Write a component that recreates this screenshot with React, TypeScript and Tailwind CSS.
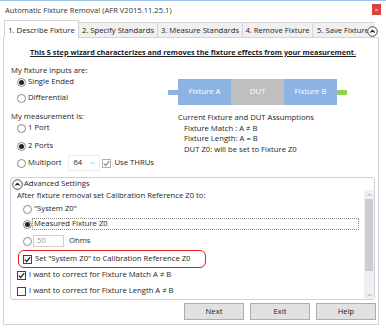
import React from 'react';

function Radio({ on }: { on?: boolean }) {
  return (
    <span className="flex h-[9px] w-[9px] shrink-0 items-center justify-center rounded-full border border-[#8a8a8a] bg-white">
      {on && <span className="h-[5px] w-[5px] rounded-full bg-[#222]" />}
    </span>
  );
}

function Check({ on, dim }: { on?: boolean; dim?: boolean }) {
  return (
    <span
      className={`flex h-[9px] w-[9px] shrink-0 items-center justify-center border bg-white ${
        dim ? 'border-[#b0b0b0]' : 'border-[#444]'
      }`}
    >
      {on && (
        <svg width="7" height="7" viewBox="0 0 7 7">
          <path d="M0.8 3.6 L2.7 5.5 L6.2 1.2" fill="none" stroke={dim ? '#8c8c8c' : '#222'} strokeWidth="1.2" />
        </svg>
      )}
    </span>
  );
}

function UpCircle() {
  return (
    <svg width="11" height="11" viewBox="0 0 11 11" className="shrink-0">
      <circle cx="5.5" cy="5.5" r="4.8" fill="#fff" stroke="#333" strokeWidth="0.9" />
      <path d="M3.4 6.5 L5.5 4.4 L7.6 6.5" fill="none" stroke="#222" strokeWidth="1.1" />
    </svg>
  );
}

function Btn({ label }: { label: string }) {
  return (
    <button className="flex h-[17px] w-[60px] items-center justify-center border border-[#adadad] bg-[#e1e1e1] text-[#1e1e1e]">
      {label}
    </button>
  );
}

export default function App() {
  return (
    <div className="h-[328px] w-[386px] overflow-hidden border-t border-[#9cc3ea] bg-white font-['Open_Sans',sans-serif] text-[7.7px] text-[#1e1e1e]">
      {/* title bar */}
      <div className="flex h-[19px] items-start justify-between px-[5px]">
        <span className="mt-[4px] text-[7.6px] leading-[11px] text-[#333]">
          Automatic Fixture Removal (AFR V2015.11.25.1)
        </span>
        <span className="mt-[3px] flex h-[11px] w-[9px] items-center justify-center bg-[#d9443f] text-[6px] leading-none text-white">
          ×
        </span>
      </div>

      {/* tabs */}
      <div className="relative flex h-[17px] items-end pl-[4px]">
        <div className="relative z-10 -mb-px flex h-[18px] w-[75px] items-center justify-center border border-b-0 border-[#d4d4d4] bg-white pt-[3px]">
          1. Describe Fixture
        </div>
        <div className="flex h-[15px] w-[79px] items-center justify-center border-t border-r border-[#d4d4d4] bg-[#f0f0f0] pt-[2px]">
          2. Specify Standards
        </div>
        <div className="flex h-[15px] w-[85px] items-center justify-center border-t border-r border-[#d4d4d4] bg-[#f0f0f0] pt-[2px]">
          3. Measure Standards
        </div>
        <div className="flex h-[15px] w-[70px] items-center justify-center border-t border-r border-[#d4d4d4] bg-[#f0f0f0] pt-[2px]">
          4. Remove Fixture
        </div>
        <div className="flex h-[15px] w-[62px] items-center overflow-hidden whitespace-nowrap border-t border-[#d4d4d4] bg-[#f0f0f0] pt-[2px] pl-[4px]">
          5. Save Fixture
        </div>
        <div className="absolute top-[6px] right-[8px] rounded-full bg-white">
          <UpCircle />
        </div>
      </div>

      {/* panel */}
      <div className="ml-[3px] h-[288px] w-[376px] border border-[#d4d4d4] bg-white">
        <div className="mt-[7px] h-[14px] pl-[4px] text-center text-[7.3px] leading-[14px] font-bold text-[#222] underline decoration-1 underline-offset-[1px]">
          This 5 step wizard characterizes and removes the fixture effects from your measurement.
        </div>

        <div className="flex">
          {/* left column */}
          <div className="w-[164px] pl-[7px]">
            <div className="mt-[5px] h-[12px] leading-[12px]">My fixture inputs are:</div>
            <div className="flex h-[12px] items-center gap-[2px] pl-[6px]">
              <Radio on />
              <span>Single Ended</span>
            </div>
            <div className="mt-[4px] flex h-[12px] items-center gap-[2px] pl-[6px]">
              <Radio />
              <span>Differential</span>
            </div>
            <div className="mt-[6px] h-[12px] leading-[12px]">My measurement is:</div>
            <div className="flex h-[12px] items-center gap-[2px] pl-[6px]">
              <Radio />
              <span>1 Port</span>
            </div>
            <div className="mt-[6px] flex h-[12px] items-center gap-[2px] pl-[6px]">
              <Radio on />
              <span>2 Ports</span>
            </div>
            <div className="mt-[3px] flex h-[16px] items-center pl-[6px]">
              <Radio />
              <span className="ml-[2px]">Multiport</span>
              <div className="ml-[7px] flex h-[16px] w-[32px] items-center justify-between border border-[#ececec] px-[4px]">
                <span>64</span>
                <svg width="5" height="4" viewBox="0 0 5 4">
                  <path d="M0.5 1 L2.5 3 L4.5 1" fill="none" stroke="#b0b0b0" strokeWidth="0.9" />
                </svg>
              </div>
              <span className="ml-[2px]">
                <Check on dim />
              </span>
              <span className="ml-[3px]">Use THRUs</span>
            </div>
          </div>

          {/* right column */}
          <div className="flex flex-col">
            <div className="mt-[20px] flex h-[26px] items-center text-white">
              <div className="h-[5px] w-[10px] bg-[#8db3e2]" />
              <div className="flex h-[26px] w-[53px] items-center justify-center bg-[#8db3e2]">Fixture A</div>
              <div className="flex h-[26px] w-[53px] items-center justify-center bg-[#bfbfbf]">DUT</div>
              <div className="flex h-[26px] w-[53px] items-center justify-center bg-[#8db3e2]">Fixture B</div>
              <div className="h-[5px] w-[10px] bg-[#92d050]" />
            </div>
            <div className="mt-[7px] leading-[10.5px]">
              <div className="pl-[10px]">Current Fixture and DUT Assumptions</div>
              <div className="pl-[16px]">Fixture Match : A ≠ B</div>
              <div className="pl-[16px]">Fixture Length: A = B</div>
              <div className="pl-[16px]">DUT Z0: will be set to Fixture Z0</div>
            </div>
          </div>
        </div>

        {/* advanced settings */}
        <div className="mt-[6px] ml-[6px] flex h-[123px] w-[365px] flex-col rounded-[3px] border border-[#c8d4e3]">
          <div className="flex h-[12px] items-center gap-[1px] pl-[1px]">
            <UpCircle />
            <span>Advanced Settings</span>
          </div>
          <div className="flex flex-1">
            <div className="flex-1 pl-[6px]">
              <div className="h-[10px] leading-[10px]">After fixture removal set Calibration Reference Z0 to:</div>
              <div className="mt-[3px] flex h-[12px] items-center gap-[1px] pl-[6px]">
                <Radio />
                <span className="ml-[1px]">"System Z0"</span>
              </div>
              <div className="mt-[3px] flex h-[12px] items-center pl-[6px]">
                <Radio on />
                <div className="flex h-[12px] w-[327px] items-center border border-dotted border-[#8a8a8a] pl-[1px]">
                  Measured Fixture Z0
                </div>
              </div>
              <div className="mt-[5px] flex h-[12px] items-center pl-[6px]">
                <Radio />
                <div className="ml-[1px] flex h-[12px] w-[31px] items-center border border-[#d0d0d0] pl-[3px] text-[#9a9a9a]">
                  50
                </div>
                <span className="ml-[5px]">Ohms</span>
              </div>
              <div className="mt-[3px] ml-[1px] flex h-[18px] w-[188px] items-center gap-[3px] rounded-[6px] border border-[#e0201c] pl-[4px]">
                <Check on />
                <span>Set "System Z0" to Calibration Reference Z0</span>
              </div>
              <div className="mt-[1px] flex h-[12px] items-center gap-[3px]">
                <Check on />
                <span>I want to correct for Fixture Match A ≠ B</span>
              </div>
              <div className="mt-[4px] flex h-[12px] items-center gap-[3px]">
                <Check />
                <span>I want to correct for Fixture Length A ≠ B</span>
              </div>
            </div>
            {/* scrollbar */}
            <div className="flex w-[10px] flex-col bg-[#f0f0f0]">
              <div className="flex h-[9px] items-center justify-center">
                <svg width="5" height="4" viewBox="0 0 5 4">
                  <path d="M0.5 3 L2.5 1 L4.5 3" fill="none" stroke="#a0a0a0" strokeWidth="0.9" />
                </svg>
              </div>
              <div className="mx-[1px] h-[72px] bg-[#cdcdcd]" />
              <div className="flex-1" />
              <div className="flex h-[9px] items-center justify-center">
                <svg width="5" height="4" viewBox="0 0 5 4">
                  <path d="M0.5 1 L2.5 3 L4.5 1" fill="none" stroke="#a0a0a0" strokeWidth="0.9" />
                </svg>
              </div>
            </div>
          </div>
        </div>

        {/* buttons */}
        <div className="mt-[3px] flex justify-end gap-[6px] pr-[2px]">
          <Btn label="Next" />
          <Btn label="Exit" />
          <Btn label="Help" />
        </div>
      </div>
    </div>
  );
}
